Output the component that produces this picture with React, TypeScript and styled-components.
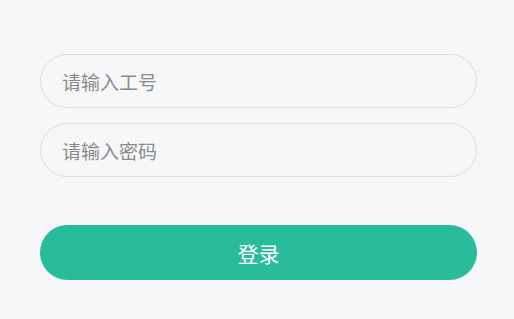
import React from 'react';
import styled, { createGlobalStyle } from 'styled-components';

const GlobalStyle = createGlobalStyle`
  html, body {
    margin: 0;
    padding: 0;
    background: #f6f7f9;
  }
  body {
    font-family: 'Noto Sans CJK SC', 'Noto Sans', sans-serif;
  }
`;

const Page = styled.div`
  width: 514px;
  height: 319px;
  box-sizing: border-box;
  padding: 54px 37px 0 40px;
  background: #f6f7f9;
`;

const Form = styled.form`
  display: flex;
  flex-direction: column;
  gap: 15px;
`;

const Field = styled.input`
  box-sizing: border-box;
  width: 100%;
  height: 54px;
  padding: 0 21px;
  border: 1px solid #dcdfe3;
  border-radius: 27px;
  background: transparent;
  font-family: 'Noto Sans CJK SC', 'Noto Sans', sans-serif;
  font-size: 19px;
  color: #333;
  outline: none;

  &::placeholder {
    color: #8a8a8a;
  }
`;

const Submit = styled.button`
  margin-top: 33px;
  height: 55px;
  border: none;
  border-radius: 28px;
  background: #29bc9b;
  color: #fff;
  font-family: 'Noto Sans CJK SC', 'Noto Sans', sans-serif;
  font-size: 21px;
  cursor: pointer;
`;

export default function App() {
  return (
    <Page>
      <GlobalStyle />
      <Form onSubmit={(e) => e.preventDefault()}>
        <Field type="text" placeholder="请输入工号" />
        <Field type="password" placeholder="请输入密码" />
        <Submit type="submit">登录</Submit>
      </Form>
    </Page>
  );
}
